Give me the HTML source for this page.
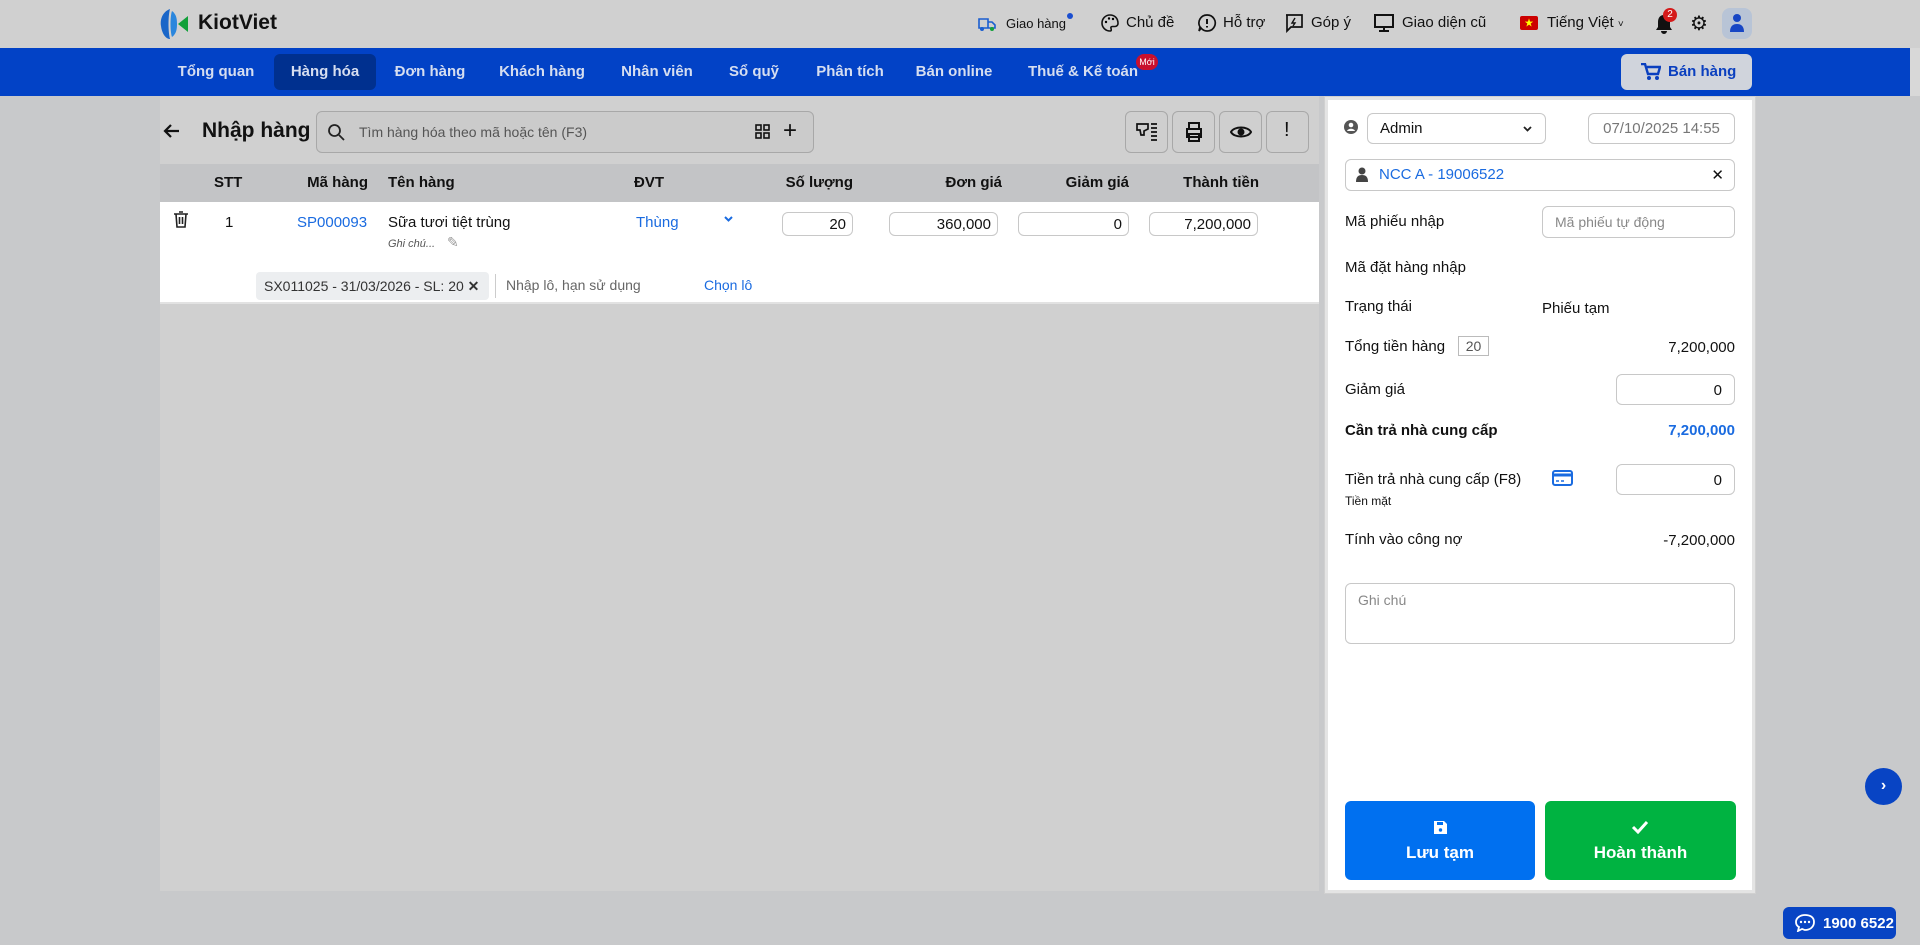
<!DOCTYPE html>
<html><head><meta charset="utf-8"><style>
*{box-sizing:border-box;margin:0;padding:0}
body{width:1920px;height:945px;overflow:hidden;background:#c8c9cb;font-family:"Liberation Sans","Noto Sans CJK SC",sans-serif;color:#111;font-size:15px;position:relative}
.a{position:absolute;white-space:nowrap}
.top{position:absolute;left:0;top:0;width:1920px;height:48px;background:#d0d0d0}
.nav{position:absolute;left:0;top:48px;width:1910px;height:48px;background:#0242c6}
.nav .i{position:absolute;top:0;line-height:48px;color:#d6def0;font-weight:bold;font-size:15px;transform:translateX(-50%)}
.inp{position:absolute;background:#fff;border:1px solid #c8c8c8;border-radius:6px}
.btn{position:absolute;border:1px solid #a8a8a8;border-radius:6px;background:#cfcfcf}
.th{position:absolute;top:164px;line-height:38px;font-weight:bold;font-size:15px}
.r{text-align:right}
.blue{color:#1a6be0}
</style></head><body>
<div class="top"></div>
<div class="a" style="left:160px;top:96px;width:1159px;height:795px;background:#d0d0d0"></div>
<!-- logo -->
<svg class="a" style="left:160px;top:8px" width="34" height="32" viewBox="0 0 34 32"><path d="M10 1 C2 4 0 12 1 18 C2 26 6 31 10 31 C8 24 8 8 10 1Z" fill="#1a66c8"/><path d="M12 3 C16 6 17 10 17 16 C17 22 16 26 12 29 C10 24 10 8 12 3Z" fill="#2a86dd"/><path d="M28 8 L18 16 L28 24 Z" fill="#12a03a"/></svg>
<div class="a" style="left:198px;top:11px;font-size:21px;font-weight:bold;color:#111">KiotViet</div>
<!-- top right -->
<svg class="a" style="left:977px;top:14px" width="20" height="20" viewBox="0 0 20 20"><path d="M2 5h9v9H2zM11 8h4l3 3v3h-7z" fill="none" stroke="#1a5ed0" stroke-width="1.6"/><circle cx="5" cy="15" r="2" fill="#1a5ed0"/><circle cx="15" cy="15" r="2" fill="#12a03a"/></svg>
<div class="a" style="left:1006px;top:16px;font-size:13px">Giao hàng</div>
<div class="a" style="left:1067px;top:13px;width:6px;height:6px;border-radius:3px;background:#1a4ed0"></div>
<svg class="a" style="left:1100px;top:13px" width="20" height="20" viewBox="0 0 20 20"><path d="M10 2a8 8 0 1 0 0 16c1.5 0 1.5-1.5 1-2.5s0-2 1.5-2H15a3 3 0 0 0 3-3C18 5 14.5 2 10 2z" fill="none" stroke="#111" stroke-width="1.6"/><circle cx="6" cy="9" r="1.2"/><circle cx="9" cy="5.5" r="1.2"/><circle cx="13" cy="6" r="1.2"/></svg>
<div class="a" style="left:1126px;top:14px;font-size:15px">Chủ đề</div>
<svg class="a" style="left:1197px;top:13px" width="20" height="20" viewBox="0 0 20 20"><path d="M10 2a8 8 0 1 1-6 13l-2 3 1-4A8 8 0 0 1 10 2z" fill="none" stroke="#111" stroke-width="1.7"/><path d="M10 6v5M10 13v1.5" stroke="#111" stroke-width="2"/></svg>
<div class="a" style="left:1223px;top:14px;font-size:15px">Hỗ trợ</div>
<svg class="a" style="left:1284px;top:13px" width="20" height="20" viewBox="0 0 20 20"><path d="M2 2h16v12H7l-4 4V2z" fill="none" stroke="#111" stroke-width="1.7"/><path d="M11 5l-3 5h3l-2 3" stroke="#111" stroke-width="1.4" fill="none"/></svg>
<div class="a" style="left:1311px;top:14px;font-size:15px">Góp ý</div>
<svg class="a" style="left:1374px;top:13px" width="20" height="20" viewBox="0 0 20 20"><rect x="1" y="2" width="18" height="12" fill="none" stroke="#111" stroke-width="2"/><path d="M10 14v3M5 18h10" stroke="#111" stroke-width="2"/></svg>
<div class="a" style="left:1402px;top:14px;font-size:15px">Giao diện cũ</div>
<div class="a" style="left:1520px;top:16px;width:18px;height:14px;background:#c00;border-radius:2px;color:#ff0;font-size:9px;text-align:center;line-height:14px">★</div>
<div class="a" style="left:1547px;top:14px;font-size:15px">Tiếng Việt <span style="font-size:10px">˅</span></div>
<svg class="a" style="left:1655px;top:13px" width="18" height="22" viewBox="0 0 18 22"><path d="M9 2c-4 0-6 3-6 7v5l-2 3h16l-2-3V9c0-4-2-7-6-7zM6 18a3 3 0 0 0 6 0z" fill="#111"/></svg>
<div class="a" style="left:1663px;top:8px;width:14px;height:14px;border-radius:7px;background:#d41a1a;color:#fff;font-size:10px;text-align:center;line-height:14px">2</div>
<div class="a" style="left:1690px;top:11px;font-size:20px">⚙</div>
<div class="a" style="left:1722px;top:8px;width:30px;height:31px;border-radius:8px;background:#b8c4d6"></div>
<svg class="a" style="left:1729px;top:13px" width="16" height="20" viewBox="0 0 16 20"><circle cx="8" cy="5" r="4" fill="#1746c4"/><path d="M1 19c0-6 3-8 7-8s7 2 7 8z" fill="#1746c4"/></svg>
<!-- nav -->
<div class="nav">
<div class="a" style="left:274px;top:6px;width:102px;height:36px;border-radius:6px;background:#00308f"></div>
<div class="i" style="left:216px">Tổng quan</div>
<div class="i" style="left:325px">Hàng hóa</div>
<div class="i" style="left:430px">Đơn hàng</div>
<div class="i" style="left:542px">Khách hàng</div>
<div class="i" style="left:657px">Nhân viên</div>
<div class="i" style="left:754px">Sổ quỹ</div>
<div class="i" style="left:850px">Phân tích</div>
<div class="i" style="left:954px">Bán online</div>
<div class="i" style="left:1083px">Thuế &amp; Kế toán</div>
<div class="a" style="left:1136px;top:6px;width:22px;height:16px;border-radius:8px;background:#c8102e;color:#fff;font-size:9px;text-align:center;line-height:16px">Mới</div>
<div class="a" style="left:1621px;top:6px;width:131px;height:36px;border-radius:6px;background:#d0d4dc"></div>
<svg class="a" style="left:1641px;top:15px" width="20" height="18" viewBox="0 0 20 18"><path d="M0 1h4l3 10h10l2-7H6" fill="none" stroke="#0a3fbf" stroke-width="2.4"/><circle cx="8" cy="15" r="2" fill="#0a3fbf"/><circle cx="16" cy="15" r="2" fill="#0a3fbf"/></svg>
<div class="a" style="left:1668px;top:0;line-height:48px;font-weight:bold;color:#0a3fbf;font-size:15px">Bán hàng</div>
</div>
<div class="a" style="left:1910px;top:48px;width:10px;height:48px;background:#d8d8d8"></div>
<!-- title row -->
<svg class="a" style="left:163px;top:122px" width="18" height="18" viewBox="0 0 18 18"><path d="M16 9H3M8 3L2 9l6 6" fill="none" stroke="#111" stroke-width="2.2"/></svg>
<div class="a" style="left:202px;top:119px;font-size:21px;font-weight:bold">Nhập hàng</div>
<div class="inp" style="left:316px;top:111px;width:498px;height:42px;background:#cbcbcb;border-color:#a8a8a8"></div>
<svg class="a" style="left:327px;top:123px" width="18" height="18" viewBox="0 0 18 18"><circle cx="7.5" cy="7.5" r="5.5" fill="none" stroke="#222" stroke-width="1.8"/><path d="M12 12l5 5" stroke="#222" stroke-width="1.8"/></svg>
<div class="a" style="left:359px;top:124px;font-size:14px;color:#555">Tìm hàng hóa theo mã hoặc tên (F3)</div>
<svg class="a" style="left:755px;top:124px" width="15" height="15" viewBox="0 0 15 15"><g fill="none" stroke="#111" stroke-width="1.6"><rect x="1" y="1" width="5" height="5"/><rect x="9" y="1" width="5" height="5"/><rect x="1" y="9" width="5" height="5"/><rect x="9" y="9" width="5" height="5"/></g></svg>
<div class="a" style="left:783px;top:117px;font-size:24px">+</div>
<div class="btn" style="left:1125px;top:111px;width:43px;height:42px"></div>
<div class="btn" style="left:1172px;top:111px;width:43px;height:42px"></div>
<div class="btn" style="left:1219px;top:111px;width:43px;height:42px"></div>
<div class="btn" style="left:1266px;top:111px;width:43px;height:42px"></div>
<svg class="a" style="left:1136px;top:122px" width="22" height="20" viewBox="0 0 22 20"><path d="M1 2h11v5l-4 2v4H5l-1-5H1z" fill="none" stroke="#111" stroke-width="1.7"/><path d="M15 2h6M15 6h6M15 10h6M15 14h6M15 18h6" stroke="#111" stroke-width="1.8"/></svg>
<svg class="a" style="left:1184px;top:121px" width="20" height="22" viewBox="0 0 20 22"><path d="M5 8V2h10v6M3 8h14v8H3zM5 13h10v7H5z" fill="none" stroke="#111" stroke-width="2"/></svg>
<svg class="a" style="left:1230px;top:123px" width="22" height="18" viewBox="0 0 22 18"><path d="M1 9c3-6 17-6 20 0-3 6-17 6-20 0z" fill="none" stroke="#111" stroke-width="2"/><circle cx="11" cy="9" r="3.5" fill="#111"/></svg>
<div class="a" style="left:1284px;top:119px;font-size:20px">!</div>
<!-- table -->
<div class="a" style="left:160px;top:164px;width:1159px;height:38px;background:#c3c4c6"></div>
<div class="a" style="left:160px;top:202px;width:1159px;height:102px;background:#fff;border-bottom:2px solid #e2e2e2"></div>
<div class="th" style="left:214px">STT</div>
<div class="th r" style="left:290px;width:78px">Mã hàng</div>
<div class="th" style="left:388px">Tên hàng</div>
<div class="th" style="left:634px">ĐVT</div>
<div class="th r" style="left:753px;width:100px">Số lượng</div>
<div class="th r" style="left:902px;width:100px">Đơn giá</div>
<div class="th r" style="left:1029px;width:100px">Giảm giá</div>
<div class="th r" style="left:1159px;width:100px">Thành tiền</div>
<svg class="a" style="left:174px;top:211px" width="14" height="17" viewBox="0 0 14 17"><path d="M0 3h14M5 1h4M2 3l1 13h8l1-13M5.5 6v7M8.5 6v7" fill="none" stroke="#222" stroke-width="1.6"/></svg>
<div class="a" style="left:225px;top:214px">1</div>
<div class="a blue" style="left:297px;top:214px">SP000093</div>
<div class="a" style="left:388px;top:214px">Sữa tươi tiệt trùng</div>
<div class="a" style="left:388px;top:238px;font-size:11px;font-style:italic;color:#555">Ghi chú...</div>
<div class="a" style="left:447px;top:234px;font-size:14px;color:#999">✎</div>
<svg class="a blue" style="left:724px;top:216px" width="9" height="6" viewBox="0 0 9 6"><path d="M1 1l3.5 3.5L8 1" fill="none" stroke="#1a6be0" stroke-width="2"/></svg>
<div class="a blue" style="left:636px;top:214px">Thùng</div>
<div class="inp r" style="left:782px;top:212px;width:71px;height:24px;padding:3px 6px 0 0">20</div>
<div class="inp r" style="left:889px;top:212px;width:109px;height:24px;padding:3px 6px 0 0">360,000</div>
<div class="inp r" style="left:1018px;top:212px;width:111px;height:24px;padding:3px 6px 0 0">0</div>
<div class="inp r" style="left:1149px;top:212px;width:109px;height:24px;padding:3px 6px 0 0">7,200,000</div>
<div class="a" style="left:256px;top:272px;width:233px;height:28px;background:#eceef0;border-radius:4px;font-size:14px;color:#333;padding:6px 0 0 8px">SX011025 - 31/03/2026 - SL: 20 <b>✕</b></div>
<div class="a" style="left:495px;top:274px;width:1px;height:24px;background:#ccc"></div>
<div class="a" style="left:506px;top:277px;font-size:14px;color:#666">Nhập lô, hạn sử dụng</div>
<div class="a blue" style="left:704px;top:277px;font-size:14px">Chọn lô</div>
<!-- right panel -->
<div class="a" style="left:1324px;top:96px;width:432px;height:798px;background:#fff;border:1px solid #d0d0d0;box-shadow:inset 0 0 0 3px #e4e4e4"></div>
<svg class="a" style="left:1344px;top:120px" width="14" height="14" viewBox="0 0 14 14"><circle cx="7" cy="7" r="7" fill="#555"/><circle cx="7" cy="5" r="2.3" fill="#fff"/><path d="M3 11c1-3 7-3 8 0" fill="#fff"/></svg>
<div class="inp" style="left:1367px;top:113px;width:179px;height:31px;padding:6px 0 0 12px">Admin</div>
<svg class="a" style="left:1523px;top:126px" width="9" height="6" viewBox="0 0 9 6"><path d="M1 1l3.5 3.5L8 1" fill="none" stroke="#222" stroke-width="1.8"/></svg>
<div class="inp" style="left:1588px;top:113px;width:147px;height:31px;padding:6px 0 0 0;text-align:center;color:#777">07/10/2025 14:55</div>
<div class="inp" style="left:1345px;top:159px;width:390px;height:32px;padding:6px 0 0 33px;color:#1a6be0">NCC A - 19006522<span style="position:absolute;right:10px;color:#111;font-size:15px">✕</span></div>
<svg class="a" style="left:1356px;top:167px" width="12" height="15" viewBox="0 0 12 15"><circle cx="6" cy="4" r="3.5" fill="#444"/><path d="M0 15c0-5 2-7 6-7s6 2 6 7z" fill="#444"/></svg>
<div class="a" style="left:1345px;top:213px">Mã phiếu nhập</div>
<div class="inp" style="left:1542px;top:206px;width:193px;height:32px;padding:7px 0 0 12px;color:#888;font-size:14px">Mã phiếu tự động</div>
<div class="a" style="left:1345px;top:259px">Mã đặt hàng nhập</div>
<div class="a" style="left:1345px;top:298px">Trạng thái</div>
<div class="a" style="left:1542px;top:300px">Phiếu tạm</div>
<div class="a" style="left:1345px;top:338px">Tổng tiền hàng</div>
<div class="a" style="left:1458px;top:336px;width:31px;height:20px;border:1px solid #bbb;font-size:14px;color:#555;text-align:center;line-height:18px">20</div>
<div class="a r" style="left:1600px;top:339px;width:135px">7,200,000</div>
<div class="a" style="left:1345px;top:381px">Giảm giá</div>
<div class="inp r" style="left:1616px;top:374px;width:119px;height:31px;padding:7px 12px 0 0">0</div>
<div class="a" style="left:1345px;top:422px;font-weight:bold">Cần trả nhà cung cấp</div>
<div class="a r" style="left:1600px;top:422px;width:135px;font-weight:bold;color:#1a6be0">7,200,000</div>
<div class="a" style="left:1345px;top:471px">Tiền trả nhà cung cấp (F8)</div>
<div class="a" style="left:1345px;top:494px;font-size:12px">Tiền mặt</div>
<svg class="a" style="left:1552px;top:470px" width="21" height="16" viewBox="0 0 21 16"><rect x="1" y="1" width="19" height="14" rx="2" fill="none" stroke="#1a6be0" stroke-width="2"/><path d="M1 5h19" stroke="#1a6be0" stroke-width="3"/><path d="M4 11h3M9 11h3" stroke="#1a6be0" stroke-width="1.5"/></svg>
<div class="inp r" style="left:1616px;top:464px;width:119px;height:31px;padding:7px 12px 0 0">0</div>
<div class="a" style="left:1345px;top:531px">Tính vào công nợ</div>
<div class="a r" style="left:1600px;top:532px;width:135px">-7,200,000</div>
<div class="inp" style="left:1345px;top:583px;width:390px;height:61px;padding:8px 0 0 12px;color:#888;font-size:14px">Ghi chú</div>
<div class="a" style="left:1345px;top:801px;width:190px;height:79px;border-radius:6px;background:#0070f0;color:#fff;text-align:center;font-weight:bold;font-size:17px;padding-top:42px">Lưu tạm</div>
<svg class="a" style="left:1433px;top:820px" width="15" height="15" viewBox="0 0 15 15"><path d="M1 1h10l3 3v10H1z" fill="#fff"/><rect x="4" y="2" width="6" height="3" fill="#0070f0"/><circle cx="7.5" cy="10" r="1.7" fill="#0070f0"/></svg>
<div class="a" style="left:1545px;top:801px;width:191px;height:79px;border-radius:6px;background:#00b341;color:#fff;text-align:center;font-weight:bold;font-size:17px;padding-top:42px">Hoàn thành</div>
<svg class="a" style="left:1631px;top:820px" width="18" height="14" viewBox="0 0 18 14"><path d="M2 7l5 5L16 2" fill="none" stroke="#fff" stroke-width="3"/></svg>
<div class="a" style="left:1865px;top:768px;width:37px;height:37px;border-radius:50%;background:#0844c4;color:#fff;text-align:center;line-height:36px;font-weight:bold;font-size:16px">›</div>
<div class="a" style="left:1783px;top:907px;width:113px;height:32px;border-radius:6px;background:#0844c4;color:#fff;font-weight:bold;font-size:15px;padding:8px 0 0 40px">1900 6522</div>
<svg class="a" style="left:1795px;top:914px" width="20" height="18" viewBox="0 0 20 18"><path d="M10 1C5 1 1 4 1 8c0 2 1 4 3 5l-1 4 4-2c1 0 2 1 3 1 5 0 9-3 9-8s-4-7-9-7z" fill="none" stroke="#fff" stroke-width="1.8"/><circle cx="6" cy="8" r="1.2" fill="#fff"/><circle cx="10" cy="8" r="1.2" fill="#fff"/><circle cx="14" cy="8" r="1.2" fill="#fff"/></svg>
</body></html>
